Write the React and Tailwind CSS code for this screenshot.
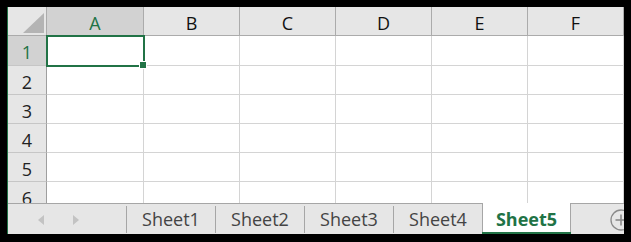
import React from "react";

const cols = ["A", "B", "C", "D", "E", "F"];
const rows = [
  { n: "1", h: "h-[30px]" },
  { n: "2", h: "h-[29px]" },
  { n: "3", h: "h-[29px]" },
  { n: "4", h: "h-[29px]" },
  { n: "5", h: "h-[29px]" },
];

function Row({ n, h, sel }) {
  return (
    <div className={`flex ${h} shrink-0`}>
      <div
        className={`w-[39px] shrink-0 flex items-center justify-center border-r border-b border-r-[#9e9e9e] border-b-[#c6c6c6] pt-[3px] ${
          sel ? "bg-[#d2d2d2] text-[#217346]" : "bg-[#e6e6e6] text-[#222]"
        }`}
      >
        {n}
      </div>
      {cols.map((c, i) => (
        <div
          key={c}
          className={`${i === 0 ? "w-[97px]" : "w-[96px]"} shrink-0 border-r border-b border-[#d4d4d4] bg-white`}
        />
      ))}
    </div>
  );
}

export default function App() {
  const tabs = ["Sheet1", "Sheet2", "Sheet3", "Sheet4"];
  return (
    <div
      className="w-[631px] h-[242px] bg-black pt-[7px] pl-[7px] pr-[7px] pb-[8px] text-[18px] leading-none"
      style={{ fontFamily: '"Open Sans", "Noto Sans", sans-serif' }}
    >
      <div className="h-full border-l border-[#217346] bg-white flex flex-col overflow-hidden relative">
        {/* grid */}
        <div className="h-[196px] shrink-0 flex flex-col overflow-hidden">
          {/* header row */}
          <div className="flex h-[29px] shrink-0">
            <div className="w-[39px] shrink-0 bg-[#e6e6e6] border-r border-b border-[#ababab] relative">
              <svg className="absolute left-0 top-0" width="38" height="28" viewBox="0 0 38 28">
                <polygon points="15,26 36,6 36,26" fill="#b4b4b4" />
              </svg>
            </div>
            {cols.map((c, i) => (
              <div
                key={c}
                className={`${i === 0 ? "w-[97px] bg-[#d2d2d2] text-[#217346]" : "w-[96px] bg-[#e6e6e6] text-[#111]"} shrink-0 border-r border-b border-[#ababab] flex items-center justify-center pt-[4px]`}
              >
                {c}
              </div>
            ))}
          </div>
          {rows.map((r, i) => (
            <Row key={r.n} n={r.n} h={r.h} sel={i === 0} />
          ))}
          <Row n="6" h="h-[29px]" />
        </div>

        {/* selection */}
        <div className="absolute left-[38px] top-[28px] w-[99px] h-[32px] border-2 border-[#217346]" />
        <div className="absolute left-[131px] top-[54px] w-[8px] h-[8px] bg-[#217346] border border-white" />

        {/* tab bar */}
        <div className="flex-1 flex border-t border-[#a6a6a6] bg-[#e6e6e6] text-[#444]">
          <div className="w-[118px] shrink-0 relative">
            <svg className="absolute left-[29px] top-[10px]" width="8" height="12" viewBox="0 0 8 12">
              <polygon points="7,1 1,6 7,11" fill="#c3c3c3" />
            </svg>
            <svg className="absolute left-[64px] top-[10px]" width="8" height="12" viewBox="0 0 8 12">
              <polygon points="1,1 7,6 1,11" fill="#c3c3c3" />
            </svg>
          </div>
          {tabs.map((t) => (
            <React.Fragment key={t}>
              <div className="w-px shrink-0 bg-[#a6a6a6] mt-[2px] mb-px" />
              <div className="w-[88px] shrink-0 flex items-center justify-center pb-px">{t}</div>
            </React.Fragment>
          ))}
          <div className="w-[89px] shrink-0 -mt-px bg-white border-x border-[#a6a6a6] relative flex items-center justify-center font-bold text-[#217346]">
            Sheet5
            <div className="absolute left-[-1px] right-[-1px] bottom-0 h-[2px] bg-[#217346]" />
          </div>
          <div className="flex-1 relative">
            <svg className="absolute left-[39px] top-[5px]" width="22" height="22" viewBox="0 0 22 22">
              <circle cx="11" cy="11" r="10" fill="none" stroke="#8a8a8a" strokeWidth="1.3" />
              <line x1="11" y1="5.5" x2="11" y2="16.5" stroke="#8a8a8a" strokeWidth="1.6" />
              <line x1="5.5" y1="11" x2="16.5" y2="11" stroke="#8a8a8a" strokeWidth="1.6" />
            </svg>
          </div>
        </div>
      </div>
    </div>
  );
}
